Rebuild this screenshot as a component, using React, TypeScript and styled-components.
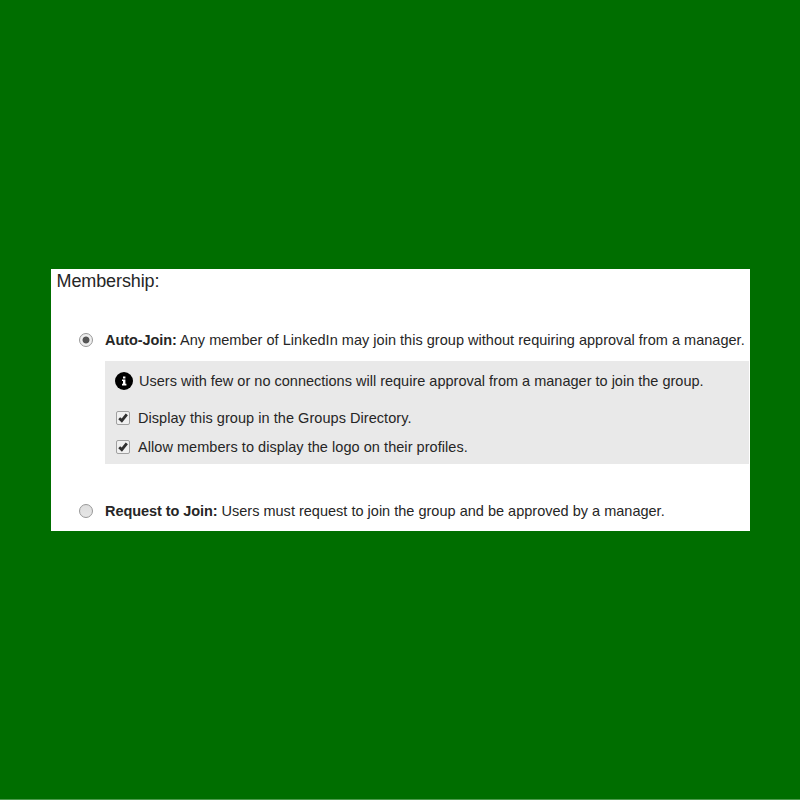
import { useState } from 'react';
import styled, { createGlobalStyle } from 'styled-components';

type JoinMode = 'auto' | 'request';

const App = () => {
  const [mode, setMode] = useState<JoinMode>('auto');
  const [inDirectory, setInDirectory] = useState(true);
  const [showLogo, setShowLogo] = useState(true);

  return (
    <StyledPage>
      <GlobalStyle />
      <StyledCard>
        <StyledTitle>Membership:</StyledTitle>

        <StyledOption>
          <StyledRadio
            type='radio'
            name='mode'
            checked={mode === 'auto'}
            onChange={() => setMode('auto')}
          />
          <StyledText $spacing={0.025}>
            <StyledStrong>Auto-Join:</StyledStrong> Any member of LinkedIn may
            join this group without requiring approval from a manager.
          </StyledText>
        </StyledOption>

        <StyledPanel>
          <StyledNotice>
            <InfoIcon />
            <StyledText $spacing={0.005}>
              Users with few or no connections will require approval from a
              manager to join the group.
            </StyledText>
          </StyledNotice>
          <StyledCheckRow>
            <StyledCheckbox>
              <StyledHiddenInput
                type='checkbox'
                checked={inDirectory}
                onChange={() => setInDirectory(!inDirectory)}
              />
              {inDirectory && <CheckMark />}
            </StyledCheckbox>
            <StyledText $spacing={0.05}>
              Display this group in the Groups Directory.
            </StyledText>
          </StyledCheckRow>
          <StyledCheckRow>
            <StyledCheckbox>
              <StyledHiddenInput
                type='checkbox'
                checked={showLogo}
                onChange={() => setShowLogo(!showLogo)}
              />
              {showLogo && <CheckMark />}
            </StyledCheckbox>
            <StyledText $spacing={0.05}>
              Allow members to display the logo on their profiles.
            </StyledText>
          </StyledCheckRow>
        </StyledPanel>

        <StyledOption>
          <StyledRadio
            type='radio'
            name='mode'
            checked={mode === 'request'}
            onChange={() => setMode('request')}
          />
          <StyledText $spacing={0.01}>
            <StyledStrong>Request to Join:</StyledStrong> Users must request to
            join the group and be approved by a manager.
          </StyledText>
        </StyledOption>
      </StyledCard>
    </StyledPage>
  );
};

const InfoIcon = () => (
  <StyledInfo viewBox='0 0 18 18'>
    <circle cx='9' cy='9' r='9' fill='#000' />
    <path d='M8 4.6h2.4v2H8z M7 7.5h3.4v4.3h1v1.7H7v-1.7h1V9.1H7z' fill='#fff' />
  </StyledInfo>
);

const CheckMark = () => (
  <StyledMark viewBox='0 0 12 12'>
    <path
      d='M2.2 6.2 L4.8 8.6 L9.8 2.4'
      fill='none'
      stroke='#303030'
      strokeWidth='2.8'
    />
  </StyledMark>
);

const GlobalStyle = createGlobalStyle`
  body {
    margin: 0;
    background: #006e00;
  }
`;

const StyledPage = styled.main`
  box-sizing: border-box;
  height: 800px;
  padding: 269px 50px 0 51px;
  border-bottom: 1px solid #4d9a4d;
  font-family: 'Liberation Sans', Arial, sans-serif;
  color: #262626;
`;

const StyledCard = styled.section`
  box-sizing: border-box;
  height: 262px;
  padding: 2px 0 0 5px;
  background: #fff;
`;

const StyledTitle = styled.h1`
  margin: 0 0 39px;
  padding-left: 0.5px;
  font-size: 18px;
  font-weight: 400;
  line-height: 20px;
  letter-spacing: -0.1px;
`;

const StyledOption = styled.label`
  display: flex;
  align-items: center;
  height: 20px;
  padding-left: 23px;
`;

const StyledRadio = styled.input`
  appearance: none;
  box-sizing: border-box;
  flex: none;
  width: 14px;
  height: 14px;
  margin: 0 12px 1px 0;
  border: 1px solid #989898;
  border-radius: 50%;
  background: linear-gradient(#dedede, #e6e6e6);

  &:checked {
    background: radial-gradient(circle, #555 3px, #eee 3.9px);
  }
`;

const StyledText = styled.span<{ $spacing: number }>`
  font-size: 14.5px;
  line-height: 20px;
  letter-spacing: ${(props) => props.$spacing}px;
  white-space: nowrap;
`;

const StyledStrong = styled.strong`
  letter-spacing: -0.07px;
`;

const StyledPanel = styled.div`
  box-sizing: border-box;
  height: 103px;
  margin: 11px 1px 37px 49px;
  padding: 10px 0 0 10px;
  background: #e9e9e9;
`;

const StyledNotice = styled.div`
  display: flex;
  align-items: center;
  gap: 6px;
  height: 20px;
  margin-bottom: 17px;
`;

const StyledInfo = styled.svg`
  flex: none;
  width: 18px;
  height: 18px;
`;

const StyledCheckRow = styled.label`
  display: flex;
  align-items: center;
  gap: 8px;
  height: 20px;
  padding-left: 1px;
  margin-bottom: 9px;
`;

const StyledCheckbox = styled.span`
  display: grid;
  box-sizing: border-box;
  flex: none;
  width: 14px;
  height: 14px;
  border: 1px solid #a0a0a0;
  border-radius: 2px;
  background: #f0f0f0;
`;

const StyledHiddenInput = styled.input`
  display: none;
`;

const StyledMark = styled.svg`
  width: 12px;
  height: 12px;
`;

export default App;
